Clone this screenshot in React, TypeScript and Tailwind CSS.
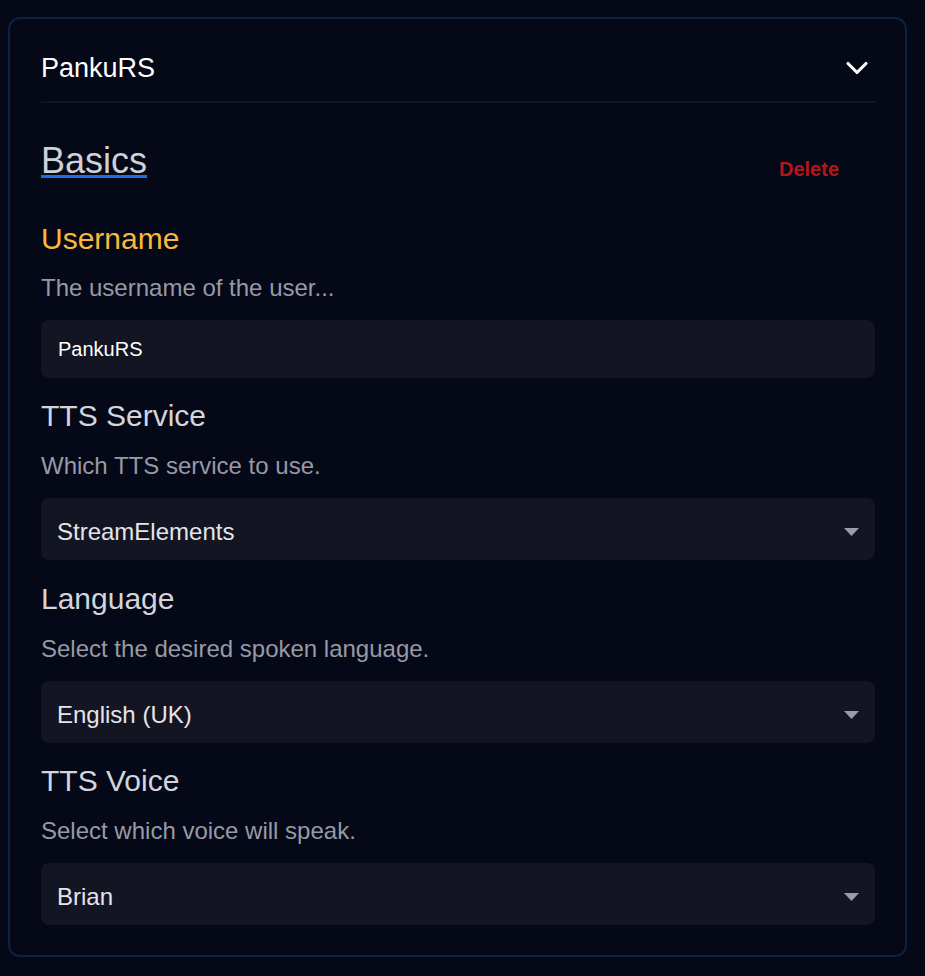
import React from "react";

const font = { fontFamily: '"Liberation Sans", Arial, sans-serif' };

function Arrow() {
  return (
    <svg width="15" height="8" viewBox="0 0 15 8" className="shrink-0">
      <polygon points="0,0 15,0 7.5,8" fill="#9a9ca6" />
    </svg>
  );
}

function SelectBox({ value }: { value: string }) {
  return (
    <div className="flex h-[62px] items-center justify-between rounded-lg bg-[#131522] pl-4 pr-4">
      <span className="pt-[5px] text-[24px] leading-[28px] text-[#e4e5ea]">{value}</span>
      <div className="pt-[6px]">
        <Arrow />
      </div>
    </div>
  );
}

function Field({
  label,
  desc,
  value,
  labelClass,
  mt,
}: {
  label: string;
  desc: string;
  value: string;
  labelClass: string;
  mt: string;
}) {
  return (
    <div className={mt}>
      <div className={"h-[36px] text-[30px] leading-[36px] " + labelClass}>{label}</div>
      <div className="mt-[16px] h-[32px] text-[24px] leading-[32px] text-[#979aa6]">{desc}</div>
      <div className="mt-[16px]">
        <SelectBox value={value} />
      </div>
    </div>
  );
}

export default function App() {
  return (
    <div className="min-h-[976px] w-full bg-[#050816] pt-[17px]" style={font}>
      <div className="ml-[8px] w-[899px] rounded-[12px] border-2 border-[#0b2246] bg-[#050816] pl-[31px] pr-[30px] pb-[30px]">
        <div className="mt-[31px] flex h-[36px] items-center justify-between">
          <span className="text-[27px] leading-[30px] text-white">PankuRS</span>
          <svg
            width="36"
            height="36"
            viewBox="0 0 24 24"
            fill="none"
            stroke="white"
            strokeWidth="2.1"
            strokeLinecap="round"
            strokeLinejoin="round"
          >
            <path d="m6 9 6 6 6-6" />
          </svg>
        </div>
        <div className="mt-[15px] h-[2px] bg-[#121422]" />

        <div className="mt-[38px] flex h-[40px] items-start justify-between">
          <span className="text-[36px] leading-[40px] text-[#cfd1d7] underline decoration-[#1b6fe3] decoration-[3px] underline-offset-[2px]">
            Basics
          </span>
          <button className="mr-[36px] mt-[14px] text-[20px] font-bold leading-[28px] text-[#b4161b]">
            Delete
          </button>
        </div>

        <div className="mt-[40px]">
          <div className="h-[36px] text-[30px] leading-[36px] text-[#f8b93c]">Username</div>
          <div className="mt-[15px] h-[32px] text-[24px] leading-[32px] text-[#979aa6]">
            The username of the user...
          </div>
          <div className="mt-[16px] flex h-[58px] items-center rounded-lg bg-[#131522] pl-[17px]">
            <span className="text-[20px] leading-[24px] text-white">PankuRS</span>
          </div>
        </div>

        <Field
          mt="mt-[20px]"
          label="TTS Service"
          desc="Which TTS service to use."
          value="StreamElements"
          labelClass="text-[#d3d5db]"
        />
        <Field
          mt="mt-[21px]"
          label="Language"
          desc="Select the desired spoken language."
          value="English (UK)"
          labelClass="text-[#d3d5db]"
        />
        <Field
          mt="mt-[20px]"
          label="TTS Voice"
          desc="Select which voice will speak."
          value="Brian"
          labelClass="text-[#d3d5db]"
        />
      </div>
    </div>
  );
}
